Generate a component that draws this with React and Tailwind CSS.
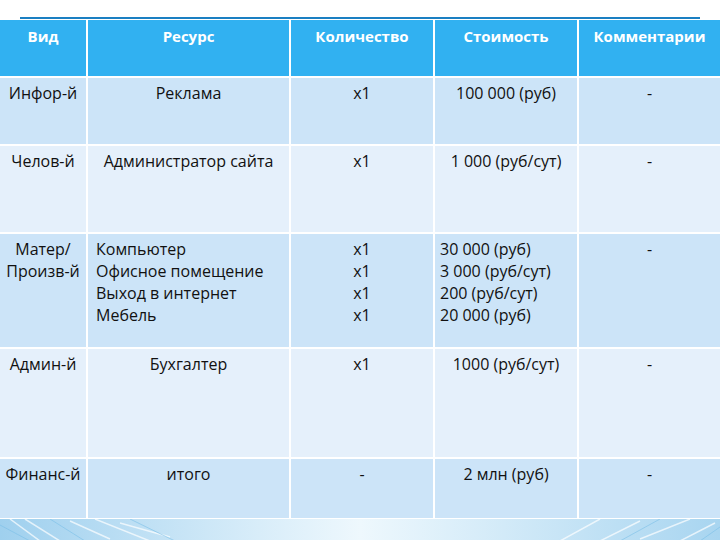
import React from 'react';

const dark = 'bg-[#cce4f8]';
const light = 'bg-[#e5f0fb]';

const rows = [
  {
    bg: dark,
    kind: ['Инфор-й'],
    res: ['Реклама'],
    qty: ['x1'],
    cost: ['100 000 (руб)'],
    left: false,
  },
  {
    bg: light,
    kind: ['Челов-й'],
    res: ['Администратор сайта'],
    qty: ['x1'],
    cost: ['1 000 (руб/сут)'],
    left: false,
  },
  {
    bg: dark,
    kind: ['Матер/', 'Произв-й'],
    res: ['Компьютер', 'Офисное помещение', 'Выход в интернет', 'Мебель'],
    qty: ['x1', 'x1', 'x1', 'x1'],
    cost: ['30 000 (руб)', '3 000 (руб/сут)', '200 (руб/сут)', '20 000 (руб)'],
    left: true,
  },
  {
    bg: light,
    kind: ['Админ-й'],
    res: ['Бухгалтер'],
    qty: ['x1'],
    cost: ['1000 (руб/сут)'],
    left: false,
  },
  {
    bg: dark,
    kind: ['Финанс-й'],
    res: ['итого'],
    qty: ['-'],
    cost: ['2 млн (руб)'],
    left: false,
  },
];

const heads = ['Вид', 'Ресурс', 'Количество', 'Стоимость', 'Комментарии'];

function Cell({ bg, lines, align }) {
  return (
    <div className={`${bg} pt-[4px] leading-[22px] ${align}`}>
      {lines.map((l) => (
        <div key={l}>{l}</div>
      ))}
    </div>
  );
}

export default function App() {
  return (
    <div
      className="w-[720px] h-[540px] overflow-hidden bg-white text-[#111111] text-[16px]"
      style={{ fontFamily: '"Open Sans", "Noto Sans", sans-serif' }}
    >
      <div className="h-[17px]" />
      <div className="ml-[20px] mr-[20px] h-[2px] bg-[#1a7fc2]" />
      <div className="h-px" />
      <div className="grid grid-cols-[86px_201px_142px_142px_141px] grid-rows-[56px_66px_86px_113px_108px_59px] gap-[2px] bg-white">
        {heads.map((h) => (
          <div
            key={h}
            className="bg-[#31b1f1] pt-[5px] leading-[22px] text-center text-[15px] font-bold text-white"
          >
            {h}
          </div>
        ))}
        {rows.map((r) => (
          <React.Fragment key={r.kind[0]}>
            <Cell bg={r.bg} lines={r.kind} align="text-center" />
            <Cell bg={r.bg} lines={r.res} align={r.left ? 'pl-2 text-left' : 'text-center'} />
            <Cell bg={r.bg} lines={r.qty} align="text-center" />
            <Cell bg={r.bg} lines={r.cost} align={r.left ? 'pl-[5px] text-left' : 'text-center'} />
            <Cell bg={r.bg} lines={['-']} align="text-center" />
          </React.Fragment>
        ))}
      </div>
      <div className="h-px bg-white" />
      <div className="relative h-[22px] bg-gradient-to-r from-[#9fd0ee] via-[#eef8fd] to-[#a8d5f0]">
        <svg className="absolute inset-0" width="720" height="22" viewBox="0 0 720 22">
          <g stroke="#ffffff" strokeOpacity="0.7" strokeWidth="1.5" fill="none">
            <path d="M10 0 L40 22" />
            <path d="M25 0 L60 22" />
            <path d="M70 2 L110 20" />
            <path d="M95 0 L150 22" />
            <path d="M120 4 L170 18" />
            <path d="M560 22 L600 0" />
            <path d="M600 22 L640 2" />
            <path d="M640 20 L690 0" />
            <path d="M680 22 L715 4" />
          </g>
          <g stroke="#7cc0e8" strokeOpacity="0.6" strokeWidth="1" fill="none">
            <path d="M0 6 L30 22" />
            <path d="M50 0 L85 22" />
            <path d="M130 0 L175 22" />
            <path d="M620 22 L660 0" />
            <path d="M700 22 L720 8" />
          </g>
        </svg>
      </div>
    </div>
  );
}
